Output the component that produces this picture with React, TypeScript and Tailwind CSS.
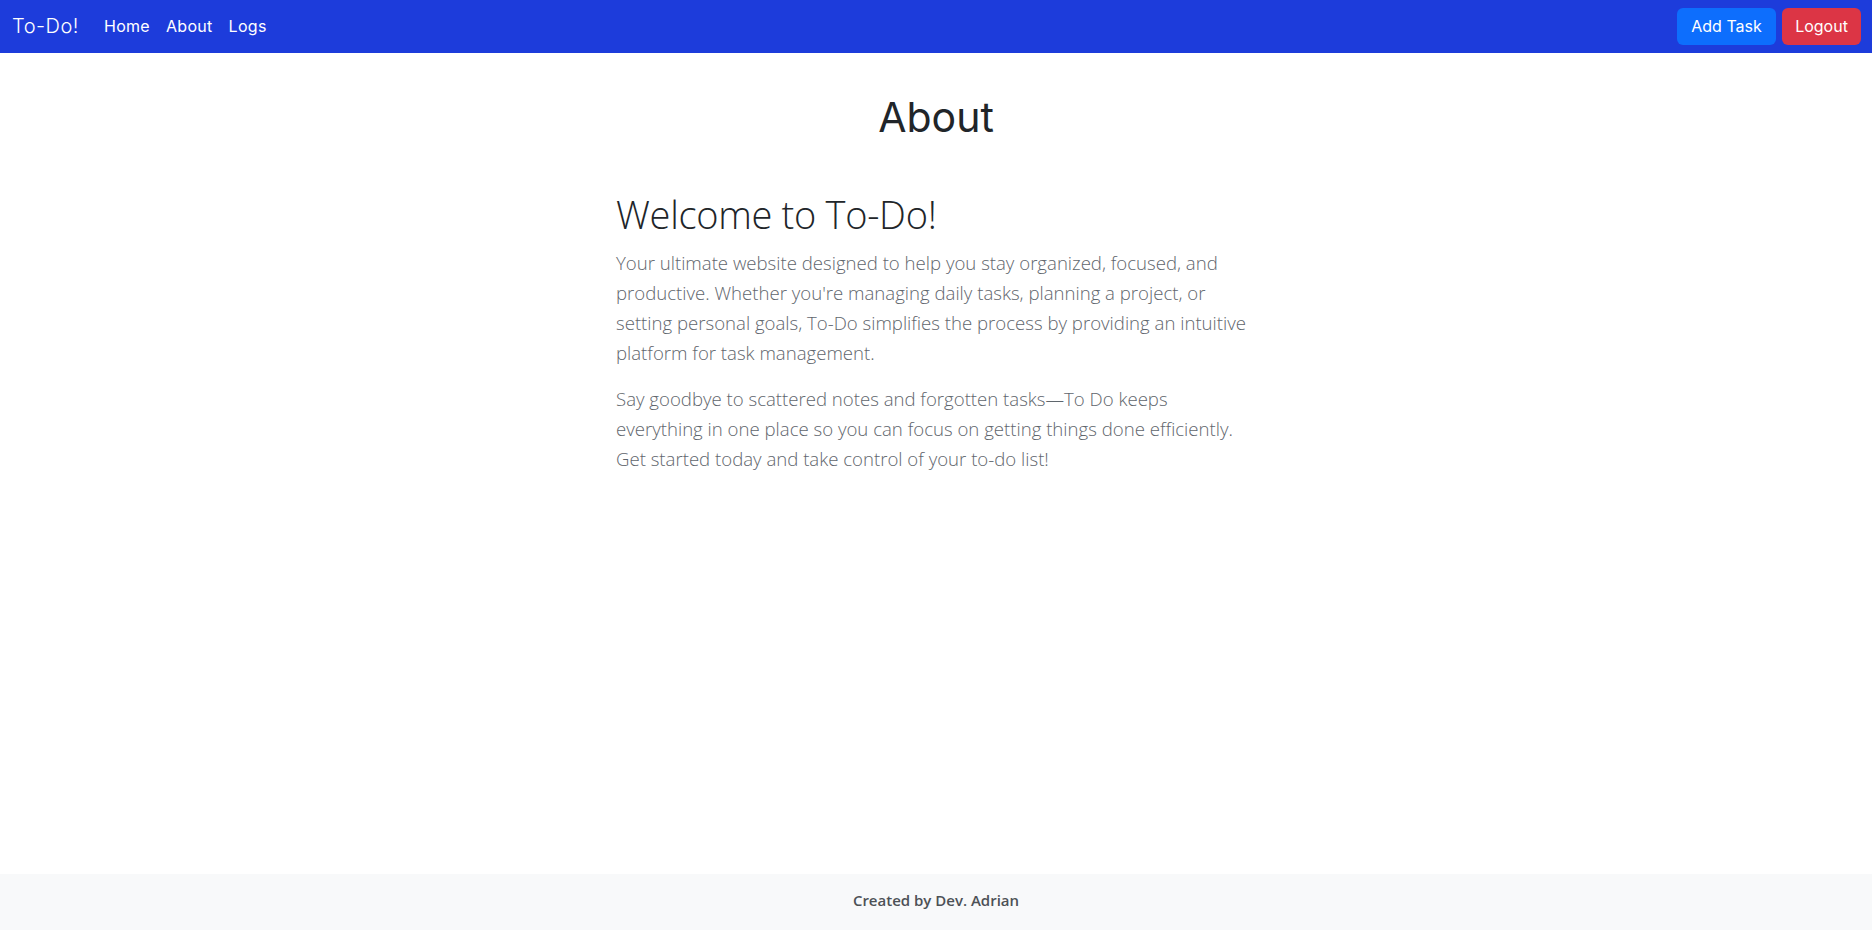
import React from 'react';

const navFont = { fontFamily: 'Inter, "Open Sans", sans-serif' };

export default function App() {
  const links = ['Home', 'About', 'Logs'];

  return (
    <div className="min-h-screen flex flex-col bg-white" style={{ fontFamily: '"Open Sans", "Noto Sans", sans-serif' }}>
      <nav className="h-[53px] bg-[#1d3cdb] flex items-center justify-between pl-3 pr-[11px]" style={navFont}>
        <div className="flex items-center -mt-[2px]">
          <a className="text-white text-[20px] font-light tracking-[0.5px] mr-[17px]">To-Do!</a>
          <ul className="flex items-center">
            {links.map((l) => (
              <li key={l}>
                <a className="block px-2 py-2 text-white text-[16px] tracking-[0.3px]">{l}</a>
              </li>
            ))}
          </ul>
        </div>
        <div className="flex items-center gap-[6px]">
          <button className="h-[37px] w-[99px] rounded-md bg-[#0d6efd] text-white text-[16px] pb-[2px]">Add Task</button>
          <button className="h-[37px] w-[79px] rounded-md bg-[#dc3545] text-white text-[16px] pb-[2px]">Logout</button>
        </div>
      </nav>

      <main className="flex-1">
        <h1 className="mt-[40px] text-center text-[41px] leading-[48px] font-normal text-[#212529]" style={navFont}>
          About
        </h1>
        <div className="w-[640px] mx-auto mt-[49px]">
          <h2 className="text-[38px] leading-[48px] font-light text-[#212529] mb-[10px] tracking-[-0.3px]">Welcome to To-Do!</h2>
          <div className="w-[636px]">
            <p className="text-[18.6px] leading-[30px] font-light text-[#5f666d] mb-4">
              Your ultimate website designed to help you stay organized, focused, and productive. Whether you're managing
              daily tasks, planning a project, or setting personal goals, To-Do simplifies the process by providing an
              intuitive platform for task management.
            </p>
            <p className="text-[18.6px] leading-[30px] font-light text-[#5f666d]">
              Say goodbye to scattered notes and forgotten tasks—To Do keeps everything in one place so you can focus on
              getting things done efficiently. Get started today and take control of your to-do list!
            </p>
          </div>
        </div>
      </main>

      <footer className="h-[56px] bg-[#f8f9fa] flex items-center justify-center">
        <span className="text-[15px] font-semibold text-[#4d5156] mt-[-3px]">Created by Dev. Adrian</span>
      </footer>
    </div>
  );
}
